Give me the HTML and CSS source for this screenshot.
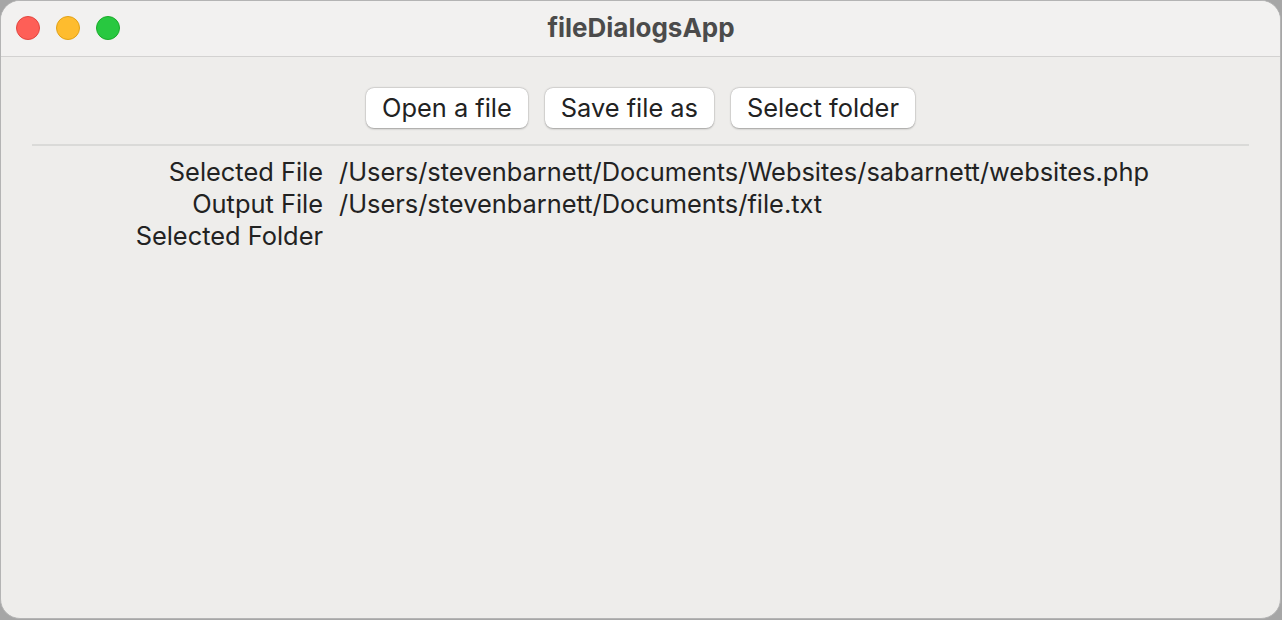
FILE: index.html
```html
<!DOCTYPE html>
<html>
<head>
<meta charset="utf-8">
<link rel="stylesheet" href="styles.css">
</head>
<body>
<div class="window">
  <div class="titlebar">
    <div class="lights">
      <span class="light red"></span>
      <span class="light yellow"></span>
      <span class="light green"></span>
    </div>
    <div class="title">fileDialogsApp</div>
  </div>
  <div class="content">
    <div class="buttons">
      <button class="btn">Open a file</button>
      <button class="btn">Save file as</button>
      <button class="btn">Select folder</button>
    </div>
    <div class="sep"></div>
    <div class="info">
      <div class="label">Selected File</div>
      <div class="value">/Users/stevenbarnett/Documents/Websites/sabarnett/websites.php</div>
      <div class="label">Output File</div>
      <div class="value">/Users/stevenbarnett/Documents/file.txt</div>
      <div class="label">Selected Folder</div>
      <div class="value"></div>
    </div>
  </div>
</div>
</body>
</html>
```
FILE: styles.css
```css
html, body {
  margin: 0;
  padding: 0;
  background: #a6a6a6;
  width: 1282px;
  height: 620px;
  overflow: hidden;
}
.window {
  box-sizing: border-box;
  width: 1281px;
  height: 619px;
  border: 1px solid #b4b4b4;
  border-radius: 20px;
  background: #eeedeb;
  overflow: hidden;
  font-family: Inter, "Liberation Sans", sans-serif;
  display: flex;
  flex-direction: column;
}
.titlebar {
  height: 55px;
  flex: none;
  background: #f2f1f0;
  border-bottom: 1px solid #d3d2d1;
  position: relative;
  display: flex;
  align-items: center;
  justify-content: center;
  box-sizing: content-box;
}
.lights {
  position: absolute;
  left: 15px;
  top: 15px;
  display: flex;
  gap: 16px;
}
.light {
  width: 24px;
  height: 24px;
  border-radius: 50%;
  box-sizing: border-box;
}
.red { background: #fe5f57; border: 1px solid #e2463f; }
.yellow { background: #febc2e; border: 1px solid #e1a116; }
.green { background: #28c840; border: 1px solid #1aab29; }
.title {
  font-size: 26px;
  font-weight: 700;
  color: #4b4b4b;
  margin-left: 1px;
  padding-bottom: 2px;
}
.content {
  flex: 1;
  padding: 31px 31px 0 31px;
}
.buttons {
  display: flex;
  justify-content: center;
  gap: 17px;
}
.btn {
  font-family: Inter, "Liberation Sans", sans-serif;
  font-size: 25.4px;
  color: #222;
  background: #fff;
  border: none;
  border-radius: 8px;
  height: 40px;
  padding: 0 16px 2px 16px;
  box-shadow: 0 0.5px 2px rgba(0,0,0,0.3), 0 0 0 0.5px rgba(0,0,0,0.08);
}
.sep {
  height: 2px;
  background: #dadad8;
  margin-top: 16px;
}
.info {
  display: grid;
  grid-template-columns: 291px 1fr;
  column-gap: 16px;
  margin-top: 10px;
  font-size: 25.4px;
  color: #222;
  line-height: 32px;
}
.label {
  text-align: right;
}
.value {
  min-height: 32px;
}
```
